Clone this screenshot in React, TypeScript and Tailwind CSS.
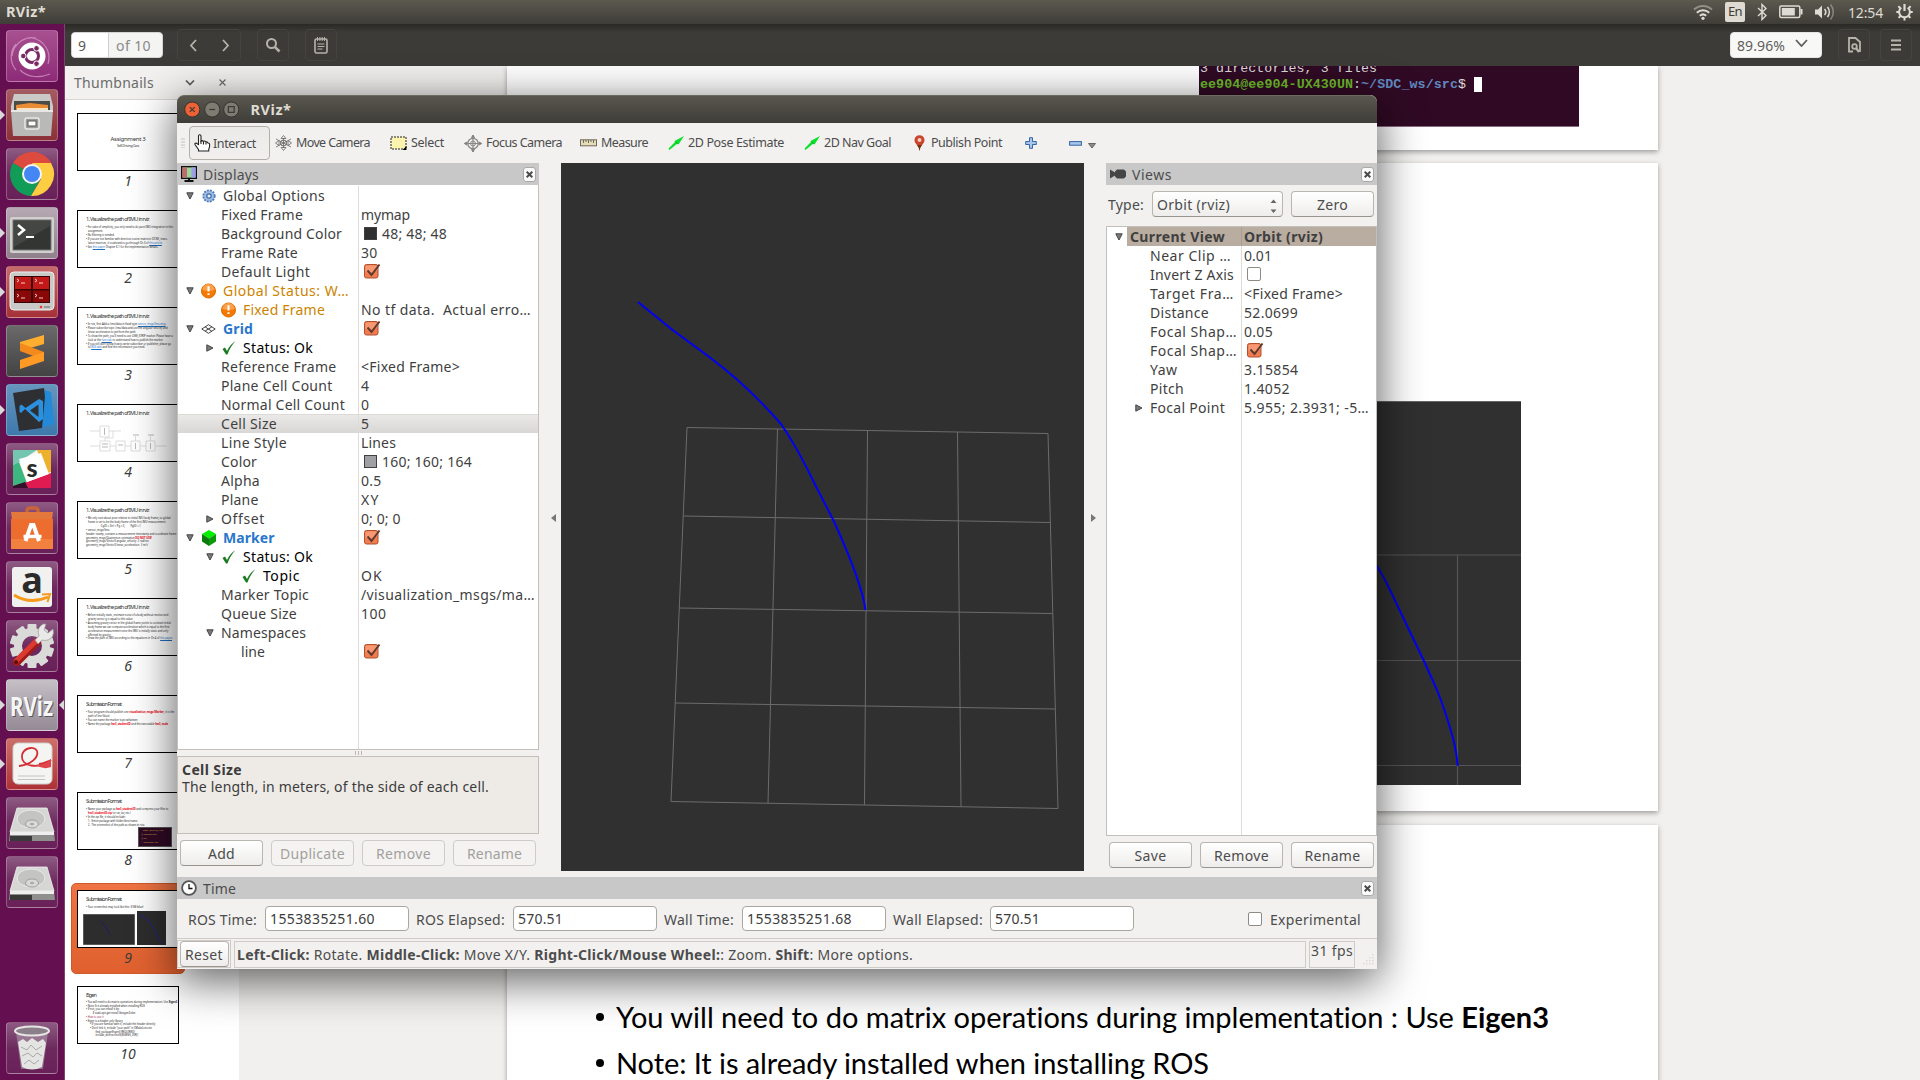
import { useLayoutEffect, useRef, type ReactNode } from "react";

/* Text run whose letter spacing is tuned so that it occupies exactly `w` pixels. */
function T({ w, className = "", children }: { w?: number; className?: string; children: ReactNode }) {
  const ref = useRef<HTMLSpanElement>(null);
  useLayoutEffect(() => {
    const el = ref.current;
    if (!el || !w) return;
    el.style.letterSpacing = "0px";
    const natural = el.getBoundingClientRect().width;
    const n = (el.textContent || "").length;
    if (n) el.style.letterSpacing = `${(w - natural) / n}px`;
  }, [w]);
  return (
    <span ref={ref} className={`inline-block shrink-0 whitespace-pre ${className}`}>
      {children}
    </span>
  );
}

/* ---------- top panel ---------- */

function TopPanel() {
  return (
    <div className="flex h-6 shrink-0 items-center bg-linear-to-b from-[#5c594e] to-[#3e3d38] pl-[6px] pr-[7px] text-[14.5px] text-[#dfdbd2]">
      <T w={40} className="font-bold">RViz*</T>
      <div className="ml-auto flex items-center">
        <svg width="20" height="18" viewBox="0 0 20 18" fill="none" stroke="#dfdbd2" strokeWidth="2">
          <path d="M1 6.5a13 13 0 0 1 18 0" opacity=".45" />
          <path d="M3.8 9.7a9 9 0 0 1 12.4 0" />
          <path d="M6.8 12.7a5 5 0 0 1 6.4 0" />
          <circle cx="10" cy="15.3" r="1.6" fill="#dfdbd2" stroke="none" />
        </svg>
        <div className="ml-3 flex h-5 w-5 items-center justify-center rounded-[2px] bg-[#dfdbd2] text-[13px] text-[#3c3b37]">
          <T w={14}>En</T>
        </div>
        <svg className="ml-3" width="10" height="18" viewBox="0 0 10 18" fill="none" stroke="#dfdbd2" strokeWidth="1.4">
          <path d="M1 5l8 7.5-4 4V1.500l4 4L1 13" />
        </svg>
        <svg className="ml-3" width="24" height="14" viewBox="0 0 24 14">
          <rect x=".8" y="1" width="20" height="11.500" rx="1.500" fill="none" stroke="#dfdbd2" strokeWidth="1.5" />
          <rect x="2.800" y="3" width="13" height="7.500" fill="#dfdbd2" />
          <rect x="21.500" y="4" width="2" height="5.500" fill="#dfdbd2" />
        </svg>
        <svg className="ml-3" width="20" height="18" viewBox="0 0 20 18" fill="none" stroke="#dfdbd2" strokeWidth="1.6">
          <path d="M0 6.500h3l4-4v13l-4-4H0z" fill="#dfdbd2" stroke="none" />
          <path d="M9.500 6a4.500 4.500 0 0 1 0 6M12.500 4a8 8 0 0 1 0 10" />
          <path d="M15.500 1.500a11.500 11.500 0 0 1 0 15" opacity=".4" />
        </svg>
        <T w={35} className="ml-[13px] text-[14px]">12:54</T>
        <svg className="ml-[13px]" width="17" height="18" viewBox="0 0 17 18" fill="none" stroke="#dfdbd2">
          <path d="M5.300 4.600a5.400 5.400 0 1 0 6.400 0" strokeWidth="2" />
          <path d="M8.500 1v7" strokeWidth="2.200" />
          <path d="M2.900 9H.3M16.700 9h-2.600M4.500 13l-1.900 1.900M12.500 13l1.900 1.900M8.500 14.500V17.500M4 5L2.400 3.200M13 5l1.600-1.800" strokeWidth="2" />
        </svg>
      </div>
    </div>
  );
}

/* ---------- launcher ---------- */

type Tile = { bg: string; art: ReactNode; left?: boolean; right?: boolean };

const purple = "bg-linear-to-b from-[#8d5a82] via-[#6d2a5e] to-[#6a2059]";

function Disk() {
  return (
    <g>
      <path d="M11 11h30l7 24H4z" fill="#d6d6d4" stroke="#f2f2f2" strokeWidth=".8" />
      <path d="M4 35h44l1 9H3z" fill="#8f8f8d" />
      <path d="M4 39h22v5H4z" fill="#3a3a3a" />
      <path d="M4 35h44v3H4z" fill="#eee" />
      <ellipse cx="25" cy="22" rx="14" ry="9" fill="#c4c4c2" stroke="#e9e9e9" />
      <ellipse cx="26" cy="27" rx="6.500" ry="4" fill="#d9d9d9" stroke="#9e9e9c" />
      <ellipse cx="26" cy="27" rx="2" ry="1.200" fill="#a9a9a7" />
    </g>
  );
}

const cog = Array.from({ length: 10 }, (_, i) => i * 36);

const tiles: Tile[] = [
  {
    bg: "bg-linear-to-b from-[#a8508f] to-[#8d2a78]",
    art: (
      <g>
        <path d="M26 8a20 20 0 0 1 16 26M10 40A20 20 0 0 1 10 14M44 44c-10 4-22 4-30-4M6 26C8 12 20 6 30 8" stroke="#d9a3cc" strokeWidth="1.200" fill="none" opacity=".7" />
        <circle cx="26" cy="26" r="13.500" fill="#fff" />
        <circle cx="26" cy="26" r="6.500" fill="none" stroke="#772a63" strokeWidth="3" />
        <g stroke="#fff" strokeWidth="1">
          <circle cx="17.300" cy="26" r="2.800" fill="#772a63" />
          <circle cx="30.500" cy="18.300" r="2.800" fill="#772a63" />
          <circle cx="30.500" cy="33.700" r="2.800" fill="#772a63" />
        </g>
      </g>
    ),
  },
  {
    bg: "bg-linear-to-b from-[#a45a62] to-[#8d3038]",
    left: true,
    art: (
      <g>
        <path d="M8 5h36l3 12v6H5v-6z" fill="#c9c9c7" />
        <rect x="8" y="12" width="36" height="12" fill="#4b4b49" />
        <path d="M10 16l14-2 18 2v8H10z" fill="#e98c33" />
        <path d="M11 19h31v4H11z" fill="#f7e3c4" />
        <path d="M5 21h42l-2 26H7z" fill="#b9b9b7" />
        <path d="M5 21h42v2H5z" fill="#e6e6e4" />
        <rect x="19" y="29" width="14" height="11" rx="2" fill="#9b9b99" stroke="#e9e9e7" strokeWidth="1.500" />
        <rect x="22" y="32" width="8" height="5" fill="#fff" stroke="#555" />
      </g>
    ),
  },
  {
    bg: purple,
    art: (
      <g>
        <path d="M26 26L7 15A22 22 0 0 1 45 15z" fill="#dd4b3e" />
        <path d="M26 4a22 22 0 0 1 19.500 11.500H26z" fill="#dd4b3e" />
        <path d="M7 15A22 22 0 0 0 25 48l9.500-17L26 26z" fill="#119d58" />
        <path d="M45 15H26l9 16-10 17A22 22 0 0 0 45 15z" fill="#ffcd41" />
        <circle cx="26" cy="26" r="10" fill="#f4f4f4" />
        <circle cx="26" cy="26" r="8" fill="#4487f4" />
      </g>
    ),
  },
  {
    bg: "bg-linear-to-b from-[#b6a9b3] to-[#8f808c]",
    left: true,
    art: (
      <g>
        <rect x="4" y="10" width="44" height="36" rx="2" fill="#d0d0ce" />
        <rect x="7" y="13" width="38" height="30" fill="#333533" stroke="#777" />
        <path d="M8 14h36v5L8 40z" fill="#4b4e4b" opacity=".7" />
        <path d="M12 18l6 5-6 5" fill="none" stroke="#fff" strokeWidth="2.500" />
        <path d="M20 30h8" stroke="#fff" strokeWidth="2" />
      </g>
    ),
  },
  {
    bg: "bg-linear-to-b from-[#c46a6a] to-[#a53038]",
    left: true,
    art: (
      <g>
        <rect x="4" y="6" width="44" height="38" rx="4" fill="#c9c9c7" stroke="#eee" />
        <rect x="8" y="10" width="36" height="27" fill="#3a0505" />
        <path d="M9 11h16v12H9zM27 11h16v12H27z" fill="#c31818" />
        <path d="M9 24.500h16v11.500H9zM27 24.500h16v11.500H27z" fill="#8a0707" />
        <path d="M11 13l2 1.500-2 1.500M15 17h4M29 13l2 1.500-2 1.500M33 17h4M11 28l2 1.500-2 1.500M15 32h4M29 28l2 1.500-2 1.500M33 32h4" stroke="#fff" strokeWidth=".8" fill="none" />
        <circle cx="35" cy="41" r="1.300" fill="#e33" />
        <path d="M38 41h6" stroke="#999" strokeWidth="2" />
      </g>
    ),
  },
  {
    bg: "bg-linear-to-b from-[#6b696a] to-[#434343]",
    art: (
      <g>
        <path d="M14 17l24-7v9l-24 7z" fill="#ffae2f" />
        <path d="M14 18l24 9v8l-24-9z" fill="#f48a1b" />
        <path d="M14 35l24-8v9l-24 8z" fill="#ff9a24" />
      </g>
    ),
  },
  {
    bg: "bg-linear-to-b from-[#6695bd] to-[#3d78ac]",
    left: true,
    art: (
      <g>
        <path d="M37 6l8 2 3 32-14 4z" fill="#2489d6" />
        <path d="M7 9l31-5 1 9-3 31-23 3z" fill="#2d2f33" />
        <path d="M33 15l4 2v18l-4 3-14-13-4 4-1.500-1v-6l2-1.500 4 3.500z" fill="#2b90de" />
        <path d="M32.500 20.500l-8.500 6 8.500 6.500z" fill="#2d2f33" />
      </g>
    ),
  },
  {
    bg: purple,
    art: (
      <g>
        <path d="M7 7l38 0v38H7z" fill="#f7f7f7" />
        <path d="M7 7h24L13 19v0L7 22z" fill="#74c6b1" />
        <path d="M31 7h14v22l-5 2z" fill="#ecb22e" />
        <path d="M7 22l6-3 8 21-14 3z" fill="#3eb67f" />
        <path d="M7 43l14-4 24-9v15H7z" fill="#df1b52" />
        <path d="M7 43l12-4 3 6H7z" fill="#33102c" />
        <path d="M13 16l22-6 8 21-22 8z" fill="#fff" />
        <text x="26" y="33.500" textAnchor="middle" fontFamily="Lato, sans-serif" fontWeight="900" fontSize="25" fill="#2b2b2b">s</text>
      </g>
    ),
  },
  {
    bg: purple,
    art: (
      <g>
        <path d="M21 18V9q0-3 3-3h5q3 0 3 3v9" stroke="#c9643a" strokeWidth="3.500" fill="none" />
        <path d="M5 10h42l-1 8H6z" fill="#e4773c" />
        <path d="M5 17h42v30H5z" fill="#ec6d2d" />
        <path d="M5 37h42v10H5z" fill="#f2803f" />
        <path d="M19.500 39l5.500-16h2.500L33 39" stroke="#fff" strokeWidth="4" fill="none" />
        <path d="M17.500 34.500h18" stroke="#fff" strokeWidth="3.500" />
      </g>
    ),
  },
  {
    bg: purple,
    art: (
      <g>
        <rect x="6" y="6" width="40" height="40" rx="3" fill="#f1f1ef" />
        <text x="26" y="32" textAnchor="middle" fontFamily="Open Sans, sans-serif" fontWeight="700" fontSize="36" fill="#2b2b2b">a</text>
        <path d="M8 34q16 10 34 2" stroke="#f79a1c" strokeWidth="3" fill="none" />
        <path d="M36 33.500l8-.5-2.500 8" stroke="#f79a1c" strokeWidth="2" fill="none" />
      </g>
    ),
  },
  {
    bg: purple,
    art: (
      <g>
        <g fill="#dadad8">
          {cog.map((a) => (
            <rect key={a} x="21.500" y="4" width="9" height="10" rx="1" transform={`rotate(${a} 26 26)`} />
          ))}
        </g>
        <circle cx="26" cy="26" r="14" fill="none" stroke="#dadad8" strokeWidth="8" />
        <path d="M11 42L31 22" stroke="#a21b16" strokeWidth="8" strokeLinecap="round" />
        <path d="M10 41L30 21" stroke="#db3a32" strokeWidth="5" strokeLinecap="round" />
        <path d="M29 20l4-4q-3-8 4-12l3 0-2 6 4 3 5-4q2 8-5 11-4 1-6 0l-4 4z" fill="#e9e9e7" stroke="#999" strokeWidth=".7" />
        <circle cx="10" cy="42" r="2" fill="#5e0b08" />
      </g>
    ),
  },
  {
    bg: "bg-linear-to-b from-[#c6bfc6] to-[#958a95]",
    left: true,
    right: true,
    art: (
      <g fontFamily="Noto Sans, sans-serif" fontWeight="700">
        <text x="5" y="38" fontSize="26" fill="#5a5a5a" textLength="43" lengthAdjust="spacingAndGlyphs">RViz</text>
        <text x="4" y="36.500" fontSize="26" fill="#f6f6f6" textLength="43" lengthAdjust="spacingAndGlyphs">RViz</text>
      </g>
    ),
  },
  {
    bg: "bg-linear-to-b from-[#cc6f6a] to-[#ad3036]",
    left: true,
    art: (
      <g>
        <rect x="7" y="5" width="39" height="41" rx="5" fill="#f4f4f2" stroke="#cfcfcd" />
        <path d="M13 28c12-1 20-9 18-15-2-5-14-4-15 5-1 10 16 14 29 4-5 2-8 4-12 4" fill="none" stroke="#d32f34" strokeWidth="1.800" />
        <path d="M30 27q9 0 15-6v8q-8 3-15-2" fill="#e0474b" />
        <path d="M12 38h27M12 41.500h27" stroke="#c4c4c2" />
      </g>
    ),
  },
  { bg: purple, art: <Disk /> },
  { bg: purple, art: <Disk /> },
];

const trash: Tile = {
  bg: purple,
  art: (
    <g>
      <path d="M10 10h32l-5 37H15z" fill="#b8b0b7" opacity=".5" />
      <path d="M12 20l5-3 4 3 5-4 6 4 5-3 3 4-4 24q-10 5-20 0z" fill="#e4e4e2" />
      <path d="M15 25l6 3 4-5 5 5 6-4M16 34l6-3 5 4 4-4 5 3M18 42l5-4 5 4 5-4" fill="none" stroke="#aaa9a7" />
      <ellipse cx="26" cy="9" rx="17" ry="4.500" fill="#8c7f8a" stroke="#e6e6e4" strokeWidth="2" />
    </g>
  ),
};

function LauncherTile({ t }: { t: Tile }) {
  return (
    <div className="relative flex w-full shrink-0 pl-[6px]">
      {t.left && (
        <svg className="absolute left-0 top-[21px]" width="5" height="10">
          <path d="M0 0v10l5-5z" fill="#d9d9d9" />
        </svg>
      )}
      <div className={`h-[52px] w-[52px] overflow-hidden rounded-[4px] border border-white/25 ${t.bg}`}>
        <svg className="-ml-px -mt-px" width="52" height="52" viewBox="0 0 52 52">{t.art}</svg>
      </div>
      {t.right && (
        <svg className="absolute left-[59px] top-[21px]" width="5" height="10">
          <path d="M5 0v10L0 5z" fill="#d9d9d9" />
        </svg>
      )}
    </div>
  );
}

function Launcher() {
  return (
    <div className="flex w-[65px] shrink-0 flex-col gap-[7px] border-r border-[#7d4470] bg-[#641050] pb-[6px] pt-[6px]">
      {tiles.map((t, i) => (
        <LauncherTile key={i} t={t} />
      ))}
      <div className="mt-auto">
        <LauncherTile t={trash} />
      </div>
    </div>
  );
}

/* ---------- document viewer ---------- */

function Box({ className, children }: { className: string; children: ReactNode }) {
  return (
    <div className={`flex h-8 shrink-0 items-center rounded-[4px] border border-[#45443f] ${className}`}>{children}</div>
  );
}

function ViewerToolbar() {
  return (
    <div className="flex h-[42px] shrink-0 items-center bg-linear-to-b from-[#2a2926] via-[#3c3b37] via-20% to-[#3c3b37] pl-[6px] pr-2 text-[14px]">
      <div className="flex h-[26px] w-[92px] items-center rounded-[4px] border border-[#d4d4d2] bg-[#f4f4f3] text-[#5a5a58]">
        <div className="flex h-full w-[37px] items-center rounded-l-[3px] border-r border-[#cfcfcd] bg-white pl-[6px]">9</div>
        <div className="pl-[7px] text-[#8a8a88]">
          <T w={35}>of 10</T>
        </div>
      </div>
      <Box className="ml-[14px] w-16 justify-around">
        {["M10 4L5 9.500l5 5.500", "M6 4l5 5.500L6 15"].map((d) => (
          <svg key={d} width="16" height="18" viewBox="0 0 16 18" fill="none" stroke="#b6b3aa" strokeWidth="1.800">
            <path d={d} />
          </svg>
        ))}
      </Box>
      <Box className="ml-4 w-8 justify-center">
        <svg width="16" height="16" viewBox="0 0 16 16" fill="none" stroke="#b6b3aa">
          <circle cx="6.500" cy="6.500" r="4.500" strokeWidth="2" />
          <path d="M9.800 9.800l4.700 4.700" strokeWidth="2.500" />
        </svg>
      </Box>
      <Box className="ml-4 w-8 justify-center">
        <svg width="14" height="17" viewBox="0 0 14 17" fill="none" stroke="#b6b3aa">
          <rect x="1" y="2" width="12" height="14" rx="1.500" strokeWidth="1.600" />
          <path d="M3.500 0v4M5.900 0v4M8.200 0v4M10.500 0v4" strokeWidth="1" />
          <path d="M3.500 7h7M3.500 9.500h7M3.500 12h5" strokeWidth="1.200" />
        </svg>
      </Box>
      <div className="ml-auto flex h-[26px] w-[92px] items-center rounded-[4px] border border-[#e5e5e3] bg-[#f8f8f7] pl-[6px] text-[#5f5f5d]">
        <T w={48}>89.96%</T>
        <svg className="-mt-1 ml-[10px]" width="13" height="8" viewBox="0 0 13 8" fill="none" stroke="#5f5f5d" strokeWidth="1.800">
          <path d="M1 1l5.500 6L12 1" />
        </svg>
      </div>
      <Box className="ml-4 w-8 justify-center">
        <svg width="13" height="16" viewBox="0 0 13 16" fill="none" stroke="#b6b3aa" strokeWidth="1.800">
          <path d="M5 14.500H1V1h6.500L12 5v10" />
          <circle cx="6.500" cy="9.500" r="2.300" />
          <path d="M8 11l3 4" strokeWidth="2.400" />
        </svg>
      </Box>
      <Box className="ml-[10px] w-8 justify-center">
        <svg width="10" height="12" viewBox="0 0 10 12" stroke="#b6b3aa" strokeWidth="1.900">
          <path d="M0 1.500h10M0 6h10M0 10.500h10" />
        </svg>
      </Box>
    </div>
  );
}

const visTitle = "1. Visualize the path of IMU in rviz";

function Red({ children }: { children: ReactNode }) {
  return <b className="text-red-600">{children}</b>;
}
function Link({ children }: { children: ReactNode }) {
  return <span className="text-[#1f6fc4] underline">{children}</span>;
}

type Thumb = { title: string; lines: ReactNode[]; extra?: ReactNode };

const thumbs: Thumb[] = [
  { title: "", lines: [] },
  {
    title: visTitle,
    lines: [
      "• For sake of simplicity, you only need to do pure IMU integration in this",
      "   assignment.",
      "• No filtering is needed.",
      "• If you are not familiar with direction cosine matrices (DCM), trans-",
      <>{"   lation matrices, it is advised to go through Ch.3 of "}<Link>this article</Link>.</>,
      <>{"• See "}<Link>this paper</Link>{" Chapter 6.1 for the implementation details."}</>,
    ],
  },
  {
    title: visTitle,
    lines: [
      <>{"• In rviz, first Add a /imu/data in fixed type "}<Link>sensor_msgs/Imu.msg</Link></>,
      "• Please subscribe topic /imu/data and use the angular velocity and",
      "   linear acceleration to perform the path.",
      "• To show the path, you'll need to use LINE_STRIP marker. Please have a",
      <>{"   look at the "}<Link>tutorials</Link>{" to understand how to publish the marker."}</>,
      "• If you still don't know how to write subscriber or publisher, please go",
      <>{"   to "}<Link>ROS wiki</Link>{" and find the information you need."}</>,
    ],
  },
  {
    title: visTitle,
    lines: [],
    extra: (
      <svg className="mt-[5px]" width="82" height="30" viewBox="0 0 82 30" fill="none" stroke="#cfcfcf" strokeWidth=".7">
        <path d="M14 1h9v11h-9zM14 16h10v10H14zM30 16h9v10h-9zM45 16h9v10h-9zM60 16h9v10h-9zM4 6h10M23 6h12M4 21h10M24 21h6M39 21h6M54 21h6M69 21h11M27 6v7h-8v3M49.500 11v5M64.500 11v5" />
        <path d="M18.500 3v7M49.500 18v6M64.500 18v6M16 19h6M16 22h6M32 20h5M47 10h6M62 10h6" stroke="#999" />
      </svg>
    ),
  },
  {
    title: visTitle,
    lines: [
      "• We only care about pose relative to initial IMU body frame; so global",
      "   frame is set to be the body frame of the first IMU measurement.",
      "                      Cg(0) = I(n) = Pg = 0,        Pg(0) = I",
      "• sensor_msgs/Imu",
      "header: stamp, contains a measurement timestamp and coordinate frame",
      <>{"geometry_msgs/Quaternion orientation "}<Red>DO NOT USE!</Red></>,
      "geometry_msgs/Vector3 angular_velocity  # rad/sec",
      "geometry_msgs/Vector3 linear_acceleration  # m/s²",
    ],
  },
  {
    title: visTitle,
    lines: [
      "• Before initially static, estimate noise of a body without motion and",
      "   gravity vector g is equal to this value.",
      "• Assuming gravity vector in the global frame points to constant initial",
      "   body frame we can compute acceleration which is equal to the first",
      "   acceleration measurement since the IMU is initially static and only",
      "   affected by gravity.",
      <>{"• Draw the path of IMU according to the equations in Ch.4 of "}<Link>this paper</Link>.</>,
    ],
  },
  {
    title: "Submission Format",
    lines: [
      <>{"• Your program should publish one "}<Red>visualization_msgs/Marker</Red>{", it is the"}</>,
      "   path of line (blue).",
      "• You can name the marker topic whatever.",
      <>{"• Name the package "}<Red>hw3_studentID</Red>{" and the executable "}<Red>hw3_node</Red></>,
    ],
  },
  {
    title: "Submission Format",
    lines: [
      <>{"• Name your package as "}<Red>hw3_studentID</Red>{" and compress your files to"}</>,
      <>{"   "}<Red>hw3_studentID.zip</Red>{" (or rar, tar, etc.)"}</>,
      "• In the zip file, it should include:",
      "   1.  Entire package with folder/dest name.",
      "   2.  The screenshot of the path as shown in rviz.",
    ],
    extra: (
      <div className="absolute bottom-[2px] right-[6px] h-5 w-[34px] overflow-hidden border border-[#555] bg-[#300a24] pl-[2px] text-[2.5px] leading-[4px] text-[#c9a54a]">
        ~/SDC_ws/src$ tree
        <br />├ CMakeLists
        <br />├ src
        <br />└ package.xml
      </div>
    ),
  },
  {
    title: "Submission Format",
    lines: ["• Your screenshot may look like this: 3 KB (blue)"],
    extra: (
      <>
        <svg className="absolute bottom-[2px] left-[5px]" width="52" height="31">
          <rect width="52" height="31" fill="#2d2d2d" stroke="#888" />
          <path d="M17 7q7 5 10 14" stroke="#1d1d66" fill="none" />
        </svg>
        <svg className="absolute bottom-[2px] right-[12px]" width="29" height="34">
          <rect width="29" height="34" fill="#2d2d2d" />
          <path d="M2 3l12 9 10 20" stroke="#22228a" fill="none" />
        </svg>
      </>
    ),
  },
  {
    title: "Eigen",
    lines: [
      <>{"• You will need to do matrix operations during implementation: Use "}<b>Eigen3</b></>,
      "• Note: It is already installed when installing ROS",
      "• If not, you can install it by:",
      "          $ sudo apt-get install libeigen3-dev",
      <span className="text-[#a03050]">• How to use it</span>,
      "• Eigen is a header only library",
      "      • If you are familiar with it, include the header directly",
      "      • Don't link it, include \"your path\" in CMakeLists.txt",
      "              find_package(Eigen3 REQUIRED)",
      "              include_directories(${EIGEN3_DIR})",
    ],
  },
];

function ThumbItem({ t, n }: { t: Thumb; n: number }) {
  return (
    <div
      className={`flex h-[91px] w-[114px] shrink-0 flex-col items-center rounded-[5px] pt-[6px] ${
        n === 9 ? "border border-[#cf5a2a] bg-linear-to-b from-[#ef7443] to-[#e0602f] pt-[5px]" : ""
      }`}
    >
      <div className="relative h-[58px] w-[102px] shrink-0 overflow-hidden border border-black bg-white pl-2 pt-1 text-[#333]">
        {n === 1 ? (
          <div className="flex flex-col items-center pr-2 pt-[18px] leading-none">
            <T w={35} className="text-[6px]">Assignment 3</T>
            <T w={22} className="mt-[2px] text-[3.500px]">Self-Driving Cars</T>
          </div>
        ) : (
          <>
            <div className="flex h-2 text-[5.500px] leading-[8px]">
              <T w={t.title.length > 30 ? 63 : t.title.length > 10 ? 35 : 10}>{t.title}</T>
            </div>
            <div className={`whitespace-pre text-[2.600px] text-[#222] ${n === 10 ? "pt-[2px] leading-[3.700px]" : "pt-[3px] leading-[3.900px]"}`}>
              {t.lines.map((l, i) => (
                <div key={i}>{l}</div>
              ))}
            </div>
            {t.extra}
          </>
        )}
      </div>
      <div className="pt-px text-[14px] italic leading-[18px] text-[#3c3c3c]">{n}</div>
    </div>
  );
}

function Sidebar() {
  return (
    <div className="flex w-[174px] shrink-0 flex-col bg-white">
      <div className="flex h-[34px] shrink-0 items-center border-b border-[#d9d7d4] bg-[#f2f1f0] pl-[9px] text-[14px] text-[#6c6c6a]">
        <T w={80}>Thumbnails</T>
        <svg className="ml-[31px]" width="10" height="6" viewBox="0 0 10 6" fill="none" stroke="#5f5f5d" strokeWidth="1.700">
          <path d="M1 .5l4 4 4-4" />
        </svg>
        <svg className="ml-6" width="7" height="7" viewBox="0 0 7 7" stroke="#6c6c6a" strokeWidth="1.200">
          <path d="M.5.5l6 6M6.500.5l-6 6" />
        </svg>
      </div>
      <div className="flex flex-col gap-[6px] pl-[6px] pt-[7px]">
        {thumbs.map((t, i) => (
          <ThumbItem key={i} t={t} n={i + 1} />
        ))}
      </div>
    </div>
  );
}

const page = "relative w-[1151px] shrink-0 bg-white shadow-[0_2px_5px_rgba(0,0,0,0.35)]";

function DocumentArea() {
  return (
    <div className="flex flex-1 flex-col overflow-hidden bg-[#f1f0ee] pl-[268px]">
      <div className={`${page} mb-[13px] flex h-[84px] pl-[692px]`}>
        <div className="h-[61px] w-[380px] overflow-hidden border-b border-[#8a6a82] bg-[#300a24] pl-px font-['Liberation_Mono',monospace] text-[13.300px] leading-[15px] text-[#d8d8d8]">
          <div className="-mt-[5px] h-4">
            <T w={177}>3 directories, 3 files</T>
          </div>
          <div className="flex h-[15px] items-center">
            <T w={153} className="font-bold text-[#6cbc2a]">ee904@ee904-UX430UN</T>
            <span>:</span>
            <T w={97} className="font-bold text-[#6189c0]">~/SDC_ws/src</T>
            <span>$</span>
            <span className="ml-2 h-[15px] w-2 bg-white" />
          </div>
        </div>
      </div>
      <div className={`${page} mb-[14px] h-[648px] pt-[238px]`}>
        <svg className="ml-[570px]" width="444" height="384" viewBox="1077 401 444 384">
          <rect x="1077" y="401" width="444" height="384" fill="#303030" />
          <path d="M1077 401.500h444" stroke="#666" />
          <path d="M1077 555h444M1077 660.500h444M1077 765.500h444M1457.500 555v230" stroke="#555" strokeWidth="1.200" />
          <path d="M1370 556Q1380 569 1390 590L1410 632 1423.500 660 1437 690Q1447 715 1454 742 1457 755 1457.700 766" stroke="#0000f0" strokeWidth="2" fill="none" />
        </svg>
      </div>
      <div className={`${page} flex h-[300px] flex-col pl-[89px] pt-[169px] font-['Lato',sans-serif] text-[29px] leading-[46px] text-black`}>
        <div className="flex items-center">
          <span className="mr-[12px] h-[8px] w-[8px] rounded-full bg-black" />
          <T w={934}>
            You will need to do matrix operations during implementation : Use <b>Eigen3</b>
          </T>
        </div>
        <div className="flex items-center">
          <span className="mr-[12px] h-[8px] w-[8px] rounded-full bg-black" />
          <T w={593}>Note: It is already installed when installing ROS</T>
        </div>
      </div>
    </div>
  );
}

/* ---------- rviz widgets ---------- */

function Check({ on = true, className = "" }: { on?: boolean; className?: string }) {
  return on ? (
    <svg className={className} width="17" height="16" viewBox="0 0 17 16">
      <rect x=".5" y="1.500" width="13.500" height="13.500" rx="2" fill="#f07c50" stroke="#b1502c" />
      <path d="M1.500 3q6-1.500 12 0v4q-6 3-12 2z" fill="#f9a482" opacity=".7" />
      <path d="M3.500 7.500l4 4.500L15.500 1.500" fill="none" stroke="#5d3a2d" strokeWidth="2" />
    </svg>
  ) : (
    <span className={`block h-[14px] w-[14px] shrink-0 rounded-[2px] border border-[#8f8b84] bg-white ${className}`} />
  );
}

function Btn({ w, tw, disabled, children }: { w: string; tw: number; disabled?: boolean; children: string }) {
  return (
    <div
      className={`flex h-[26px] items-center justify-center rounded-[4px] border text-[14px] ${w} ${
        disabled
          ? "border-[#cfccc8] bg-[#f4f3f2] text-[#a3a09c]"
          : "border-[#b9b5af] border-b-[#98948e] bg-linear-to-b from-white to-[#eeedeb] text-[#4c4c4c]"
      }`}
    >
      <T w={tw}>{children}</T>
    </div>
  );
}

function CloseBox() {
  return (
    <div className="flex h-[15px] w-[13px] items-center justify-center rounded-[3px] border border-[#a9a9a7] bg-[#fafafa]">
      <svg width="7" height="7" viewBox="0 0 7 7" stroke="#4a4a4a" strokeWidth="2">
        <path d="M.7.7l5.600 5.600M6.300.7L.7 6.300" />
      </svg>
    </div>
  );
}

function PanelHead({ icon, title, w }: { icon: ReactNode; title: string; w: number }) {
  return (
    <div className="flex h-[22px] shrink-0 items-center bg-[#c8c8c8] pl-1 pr-[3px] text-[14px] text-[#4c4c4c]">
      <span className="flex w-[22px] shrink-0">{icon}</span>
      <T w={w}>{title}</T>
      <span className="ml-auto">
        <CloseBox />
      </span>
    </div>
  );
}

function Arrow({ open }: { open: boolean }) {
  return (
    <svg width="8" height="8" viewBox="0 0 8 8">
      <path d={open ? "M.8.8h6.400L4 7z" : "M.8.8v6.400L7 4z"} fill="#7a7a7a" stroke="#454545" />
    </svg>
  );
}

function WarnIcon() {
  return (
    <svg width="16" height="16" viewBox="0 0 16 16">
      <circle cx="8" cy="8" r="7.500" fill="#f57900" stroke="#d86a00" />
      <path d="M1.500 7a6.500 6.500 0 0 1 13 0q-6 2-13 0z" fill="#fba04a" />
      <path d="M8 3v5.500M8 10.300v2" stroke="#fff" strokeWidth="2.200" />
    </svg>
  );
}
function OkIcon() {
  return (
    <svg width="14" height="14" viewBox="0 0 14 14">
      <path d="M.5 8L3 6.500l2 3.500Q8 3.500 13.500 0 8 6 5.500 13.500H4z" fill="#1b7a22" />
    </svg>
  );
}
function GearIcon() {
  return (
    <svg width="14" height="14" viewBox="0 0 14 14">
      <circle cx="7" cy="7" r="5.600" fill="#a9c3e6" stroke="#4a7ab8" strokeWidth="2" strokeDasharray="1.900 1.050" />
      <circle cx="7" cy="7" r="4.600" fill="#9dbce3" />
      <circle cx="7" cy="7" r="2.200" fill="#e6eef8" stroke="#3d6ba8" strokeWidth="1.200" />
    </svg>
  );
}
function GridIcon() {
  return (
    <svg width="15" height="10" viewBox="0 0 15 10" fill="none" stroke="#444" strokeWidth="1">
      <path d="M.8 5l6.700-4.300L14.200 5 7.500 9.300zM4.100 2.900l6.700 4.300M10.900 2.900L4.100 7.100" />
    </svg>
  );
}
function CubeIcon() {
  return (
    <svg width="14" height="16" viewBox="0 0 14 16">
      <path d="M7 0l7 4-7 4.500L0 4z" fill="#00f000" />
      <path d="M0 4l7 4.500V16l-7-4.500z" fill="#0a7a0a" />
      <path d="M14 4L7 8.500V16l7-4.500z" fill="#0b9a0b" />
    </svg>
  );
}

type Row = {
  label: string;
  w: number;
  depth?: number;
  open?: boolean;
  icon?: ReactNode;
  tone?: string;
  value?: string;
  vw?: number;
  swatch?: string;
  check?: boolean;
  selected?: boolean;
};

const blue = "text-[#2a77cc] font-bold";
const amber = "text-[#cc8400]";

const displayRows: Row[] = [
  { label: "Global Options", w: 102, open: true, icon: <GearIcon /> },
  { label: "Fixed Frame", w: 82, depth: 1, value: "mymap", vw: 49 },
  { label: "Background Color", w: 121, depth: 1, swatch: "bg-[#303030]", value: "48; 48; 48", vw: 65 },
  { label: "Frame Rate", w: 77, depth: 1, value: "30", vw: 16.5 },
  { label: "Default Light", w: 89, depth: 1, check: true },
  { label: "Global Status: W…", w: 126, open: true, icon: <WarnIcon />, tone: amber },
  { label: "Fixed Frame", w: 82, depth: 1, icon: <WarnIcon />, tone: amber, value: "No tf data.  Actual erro…", vw: 170 },
  { label: "Grid", w: 30, open: true, icon: <GridIcon />, tone: blue, check: true },
  { label: "Status: Ok", w: 70, depth: 1, open: false, icon: <OkIcon />, tone: "text-black" },
  { label: "Reference Frame", w: 115.5, depth: 1, value: "<Fixed Frame>", vw: 99 },
  { label: "Plane Cell Count", w: 111.5, depth: 1, value: "4", vw: 8 },
  { label: "Normal Cell Count", w: 124, depth: 1, value: "0", vw: 8 },
  { label: "Cell Size", w: 56, depth: 1, value: "5", vw: 8, selected: true },
  { label: "Line Style", w: 66, depth: 1, value: "Lines", vw: 35 },
  { label: "Color", w: 36, depth: 1, swatch: "bg-[#a0a0a4]", value: "160; 160; 164", vw: 90 },
  { label: "Alpha", w: 39, depth: 1, value: "0.5", vw: 20.5 },
  { label: "Plane", w: 37.5, depth: 1, value: "XY", vw: 18.5 },
  { label: "Offset", w: 44, depth: 1, open: false, value: "0; 0; 0", vw: 39.5 },
  { label: "Marker", w: 51.5, open: true, icon: <CubeIcon />, tone: blue, check: true },
  { label: "Status: Ok", w: 70, depth: 1, open: true, icon: <OkIcon />, tone: "text-black" },
  { label: "Topic", w: 37, depth: 2, icon: <OkIcon />, tone: "text-black", value: "OK", vw: 21.5 },
  { label: "Marker Topic", w: 88, depth: 1, value: "/visualization_msgs/ma…", vw: 174 },
  { label: "Queue Size", w: 76, depth: 1, value: "100", vw: 25.5 },
  { label: "Namespaces", w: 85, depth: 1, open: true },
  { label: "line", w: 24, depth: 2, check: true },
];

const indent = ["pl-[8px]", "pl-[28px]", "pl-[48px]"];

function ValueCell({ r }: { r: Row }) {
  return (
    <div className="flex h-full min-w-0 flex-1 items-center overflow-hidden pl-[2px]">
      {r.check !== undefined && <Check on={r.check} className="mb-px ml-[3px]" />}
      {r.swatch && <span className={`ml-[3px] mr-[5px] block h-[13px] w-[13px] shrink-0 border border-[#404040] ${r.swatch}`} />}
      {r.value && <T w={r.vw}>{r.value}</T>}
    </div>
  );
}

function TreeRow({ r }: { r: Row }) {
  return (
    <div
      className={`flex h-[19px] shrink-0 items-center text-[14px] leading-[19px] text-[#3f3f3f] ${
        r.selected ? "bg-linear-to-b from-[#ebeae8] to-[#d9d7d5] shadow-[inset_0_1px_0_#dcdad7]" : ""
      }`}
    >
      <div className={`flex h-full w-[181px] shrink-0 items-center border-r border-[#dedcda] ${indent[r.depth ?? 0]}`}>
        <span className="flex w-[15px] shrink-0">{r.open !== undefined && <Arrow open={r.open} />}</span>
        {r.icon && <span className="flex w-[22px] shrink-0 justify-center pr-[7px]">{r.icon}</span>}
        <T w={r.w} className={r.tone ?? ""}>{r.label}</T>
      </div>
      <ValueCell r={r} />
    </div>
  );
}

/* ---------- rviz window ---------- */

function TitleBar() {
  return (
    <div className="flex h-7 shrink-0 items-center rounded-t-[7px] border-t border-[#6b6a5f] bg-linear-to-b from-[#59574d] to-[#3e3d39] pl-[7px]">
      {["close", "min", "max"].map((k) => (
        <svg key={k} className="mr-[3px]" width="16.500" height="17" viewBox="0 0 17 17">
          <circle cx="8.500" cy="8.500" r="7.800" fill={k === "close" ? "#ec6236" : "#7d7b72"} stroke="#33322e" />
          <path
            d={k === "close" ? "M6 6l5 5M11 6l-5 5" : k === "min" ? "M5.500 8.500h6" : "M5.500 5.500h6v6h-6z"}
            fill="none"
            stroke="#3c3b37"
            strokeWidth="1.300"
          />
        </svg>
      ))}
      <T w={41} className="ml-[8px] text-[14.500px] font-bold text-[#dfdbd2]">RViz*</T>
    </div>
  );
}

function ArrowTool() {
  return (
    <svg width="16" height="14" viewBox="0 0 16 14">
      <path d="M.5 12.500L7 6 6.500 5 16 0l-5.500 8.500-.8-1.200L1.500 14z" fill="#0be02c" />
      <path d="M6.500 5l4 3.800-1-1.500z" fill="#067a16" />
    </svg>
  );
}

function Tool({ icon, w, ml, gap = "gap-1", children }: { icon: ReactNode; w: number; ml: string; gap?: string; children: string }) {
  return (
    <div className={`flex shrink-0 items-center ${ml} ${gap}`}>
      {icon}
      <span className="flex pt-px">
        <T w={w}>{children}</T>
      </span>
    </div>
  );
}

function ToolBar() {
  return (
    <div className="flex h-10 shrink-0 items-center bg-[#f2f1f0] pl-1 text-[12.500px] text-[#4c4c4c]">
      <svg width="4" height="10" stroke="#c6c3bf">
        <path d="M0 1h4M0 4h4M0 7h4M0 10h4" />
      </svg>
      <div className="ml-1 flex h-[34px] w-[81px] shrink-0 items-center gap-[2px] rounded-[4px] border border-[#b3afa9] bg-linear-to-b from-[#ebeae8] to-[#f1f0ef] pl-1">
        <svg width="17" height="18" viewBox="0 0 17 18" fill="#fff" stroke="#222" strokeWidth="1.100">
          <path d="M4.500 15.500L1 10.500q-.5-1.500 1-1.500l2.500 1.500V2q0-1.300 1.200-1.300T7 2v5q1-1 2.300.3Q10.800 6.500 11.800 8q1.700-.5 2.200 1 1.700 0 1.700 1.500 0 3-1 5v1.500H4.500z" />
          <path d="M7 7v3M9.500 7.500v3M12 8.500v2" />
        </svg>
        <span className="flex pt-[2px]">
          <T w={43}>Interact</T>
        </span>
      </div>
      <Tool
        ml="ml-[5px]"
        w={74}
        icon={
          <svg width="17" height="16" viewBox="0 0 17 16" fill="none" stroke="#666">
            <circle cx="8.500" cy="8" r="3" />
            <path d="M8.500.5L6 3.500h5zM8.500 15.500L6 12.500h5zM.5 8L4 5.500v5zM16.500 8L13 5.500v5zM1 4l15 8M16 4L1 12M8.500 3v10" strokeWidth=".8" />
          </svg>
        }
      >
        Move Camera
      </Tool>
      <Tool
        ml="ml-5"
        w={33}
        icon={
          <svg width="17" height="14" viewBox="0 0 17 14">
            <rect x="1" y="1" width="15" height="12" fill="#fff3b0" stroke="#222" strokeDasharray="2 1" />
            <path d="M16.500 10v4h-4z" fill="#000" />
          </svg>
        }
      >
        Select
      </Tool>
      <Tool
        ml="ml-5"
        w={76}
        icon={
          <svg width="18" height="17" viewBox="0 0 18 17" fill="none" stroke="#888">
            <circle cx="9" cy="8.500" r="5.200" strokeWidth="1.300" />
            <circle cx="9" cy="8.500" r="2.500" />
            <path d="M9 0v17M.5 8.500h17" strokeWidth="1.200" />
            <path d="M9 0l-1.500 2.500h3zM9 17l-1.500-2.500h3zM.3 8.500L2.800 7v3zM17.700 8.500L15.200 7v3z" fill="#777" />
          </svg>
        }
      >
        Focus Camera
      </Tool>
      <Tool
        ml="ml-[18px]"
        w={47}
        icon={
          <svg width="17" height="8" viewBox="0 0 17 8">
            <rect x=".5" y=".8" width="16" height="6" fill="#e4ddb8" stroke="#6e6a5c" />
            <path d="M3.500 1v3M6 1v2M8.500 1v3M11 1v2M13.500 1v3" stroke="#6e6a5c" />
          </svg>
        }
      >
        Measure
      </Tool>
      <Tool ml="ml-5" w={96} icon={<ArrowTool />}>2D Pose Estimate</Tool>
      <Tool ml="ml-5" w={67} icon={<ArrowTool />}>2D Nav Goal</Tool>
      <Tool
        ml="ml-[23px]"
        gap="gap-[6px]"
        w={71}
        icon={
          <svg width="11" height="16" viewBox="0 0 11 16">
            <path d="M5.500 16Q5 11.500 1.800 8.500A5 5 0 1 1 9.200 8.500Q6 11.500 5.500 16z" fill="#c8452c" />
            <path d="M5.500 16Q5 12 3 10h5Q6 12 5.500 16z" fill="#6b3410" />
            <circle cx="5.500" cy="5" r="2" fill="#f6c9bd" />
          </svg>
        }
      >
        Publish Point
      </Tool>
      <svg className="ml-[23px] shrink-0" width="12" height="12" viewBox="0 0 12 12">
        <path d="M4.500.7h3v3.800h3.800v3H7.500v3.800h-3V7.500H.7v-3h3.800z" fill="#a8c6ea" stroke="#3465a4" />
      </svg>
      <svg className="ml-8 shrink-0" width="13" height="5" viewBox="0 0 13 5">
        <rect x=".6" y=".6" width="11.800" height="3.600" fill="#a8c6ea" stroke="#3465a4" />
      </svg>
      <svg className="ml-[6px] mt-[6px] shrink-0" width="8" height="6" viewBox="0 0 8 6">
        <path d="M.5.5h7L4 5z" fill="#8a8a8a" stroke="#666" />
      </svg>
    </div>
  );
}

function DisplaysPanel() {
  return (
    <div className="flex w-[362px] shrink-0 flex-col">
      <PanelHead
        title="Displays"
        w={56}
        icon={
          <svg width="16" height="17" viewBox="0 0 16 17">
            <rect x=".7" y=".7" width="14.600" height="11.600" fill="#99d699" stroke="#111" strokeWidth="1.400" />
            <rect x="1.400" y="1.400" width="4.600" height="10.200" fill="#c06a6a" />
            <rect x="10.400" y="1.400" width="4.200" height="10.200" fill="#9d9dea" />
            <path d="M7 12h2v2h3.500v2h-9v-2H7z" fill="#111" />
          </svg>
        }
      />
      <div className="flex h-[565px] shrink-0 flex-col border border-t-0 border-[#c3c0bb] bg-white pt-px">
        {displayRows.map((r, i) => (
          <TreeRow key={i} r={r} />
        ))}
        <div className="w-[181px] flex-1 border-r border-[#dedcda]" />
      </div>
      <div className="flex h-[6px] shrink-0 items-center justify-center gap-[2px]">
        <span className="h-1 w-px bg-[#bbb8b3]" />
        <span className="h-1 w-px bg-[#bbb8b3]" />
        <span className="h-1 w-px bg-[#bbb8b3]" />
      </div>
      <div className="flex h-[78px] shrink-0 flex-col border border-[#c3c0bb] bg-[#eeebe7] pl-1 pt-1 text-[14px] leading-[17px] text-[#3c3c3c]">
        <T w={60} className="self-start font-bold">Cell Size</T>
        <T w={307} className="self-start">The length, in meters, of the side of each cell.</T>
      </div>
      <div className="flex gap-2 pl-[3px] pt-[6px]">
        <Btn w="w-[83px]" tw={27}>Add</Btn>
        <Btn w="w-[83px]" tw={65} disabled>Duplicate</Btn>
        <Btn w="w-[83px]" tw={55} disabled>Remove</Btn>
        <Btn w="w-[83px]" tw={55} disabled>Rename</Btn>
      </div>
    </div>
  );
}

function Viewport() {
  return (
    <svg className="shrink-0" width="523" height="708" viewBox="561 163 523 708">
      <rect x="561" y="163" width="523" height="708" fill="#303030" />
      <g stroke="#6c6c6e" strokeWidth="1" fill="none">
        <path d="M687 427.500L1048 433.500M683.500 516L1050.500 522.500M679 608L1052.500 613.500M675 703L1055 709M671 801.500L1058 808.500" />
        <path d="M687 427.500L671 801.500M777.500 429L768 803.500M867.500 430.500L864.500 805M957.500 432L961 807M1048 433.500L1058 808.500" />
      </g>
      <path
        d="M638 302L672 329.500 710 357.500Q748 386 781 424 797 447 814 482.500L834 521.500Q862 583 865.500 610"
        stroke="#0000f2"
        strokeWidth="2"
        fill="none"
      />
    </svg>
  );
}

const viewRows: Row[] = [
  { label: "Near Clip …", w: 81, value: "0.01", vw: 28 },
  { label: "Invert Z Axis", w: 84, check: false },
  { label: "Target Fra…", w: 84, value: "<Fixed Frame>", vw: 99 },
  { label: "Distance", w: 59, value: "52.0699", vw: 54 },
  { label: "Focal Shap…", w: 87, value: "0.05", vw: 29 },
  { label: "Focal Shap…", w: 87, check: true },
  { label: "Yaw", w: 27.5, value: "3.15854", vw: 54.5 },
  { label: "Pitch", w: 34, value: "1.4052", vw: 46 },
  { label: "Focal Point", w: 75, open: false, value: "5.955; 2.3931; -5…", vw: 125 },
];

function ViewsPanel() {
  return (
    <div className="flex w-[271px] shrink-0 flex-col">
      <PanelHead
        title="Views"
        w={40}
        icon={
          <svg width="16" height="10" viewBox="0 0 16 10" fill="#454545">
            <path d="M0 0.500l5 3v3l-5 3zM7 .5h7l2 2v5l-2 2H7l-2-2v-5z" />
          </svg>
        }
      />
      <div className="flex items-center pl-[2px] pt-[6px] text-[14px] text-[#4c4c4c]">
        <T w={36}>Type:</T>
        <div className="ml-2 flex h-[26px] w-[131px] items-center rounded-[4px] border border-[#b9b5af] border-b-[#98948e] bg-linear-to-b from-white to-[#eeedeb] pl-1 pr-[5px]">
          <T w={73}>Orbit (rviz)</T>
          <svg className="ml-auto mt-1" width="7" height="14" viewBox="0 0 7 14" fill="#666">
            <path d="M.5 4h6l-3-3.500zM.5 10.500h6l-3 3.500z" />
          </svg>
        </div>
        <div className="ml-2">
          <Btn w="w-[83px]" tw={31}>Zero</Btn>
        </div>
      </div>
      <div className="mt-[9px] flex h-[610px] shrink-0 flex-col border border-[#c3c0bb] bg-white text-[14px] leading-[19px] text-[#3f3f3f]">
        <div className="flex h-[19px] shrink-0 items-center font-bold">
          <span className="flex w-5 justify-center pl-[4px]">
            <Arrow open />
          </span>
          <div className="flex h-full w-[115px] items-center border-r border-[#a89c92] bg-[#b9aca1] pl-[3px]">
            <T w={95}>Current View</T>
          </div>
          <div className="flex h-full flex-1 items-center bg-[#b9aca1] pl-[2px]">
            <T w={79}>Orbit (rviz)</T>
          </div>
        </div>
        {viewRows.map((r, i) => (
          <div key={i} className="flex h-[19px] shrink-0 items-center">
            <div className="flex h-full w-[135px] shrink-0 items-center border-r border-[#dedcda] pl-[28px]">
              <span className="flex w-[15px] shrink-0">{r.open !== undefined && <Arrow open={r.open} />}</span>
              <T w={r.w}>{r.label}</T>
            </div>
            <ValueCell r={r} />
          </div>
        ))}
        <div className="w-[135px] flex-1 border-r border-[#dedcda]" />
      </div>
      <div className="flex gap-2 pl-[3px] pt-[6px]">
        <Btn w="w-[83px]" tw={32}>Save</Btn>
        <Btn w="w-[83px]" tw={55}>Remove</Btn>
        <Btn w="w-[83px]" tw={56}>Rename</Btn>
      </div>
    </div>
  );
}

function Field({ label, lw, value, vw, ml, gap }: { label: string; lw: number; value: string; vw: number; ml: string; gap: string }) {
  return (
    <div className={`flex items-center ${ml} ${gap}`}>
      <span className="flex pt-px">
        <T w={lw}>{label}</T>
      </span>
      <div className="flex h-[25px] w-[144px] items-center rounded-[4px] border border-[#a9a59f] bg-white pl-1 text-[#3c3c3c]">
        <T w={vw}>{value}</T>
      </div>
    </div>
  );
}

function RvizWindow() {
  return (
    <div className="absolute left-[177px] top-[95px] flex h-[874px] w-[1200px] flex-col rounded-t-[7px] bg-[#f2f1f0] shadow-[0_10px_44px_2px_rgba(0,0,0,0.62)]">
      <TitleBar />
      <ToolBar />
      <div className="flex h-[714px] shrink-0">
        <DisplaysPanel />
        <div className="flex w-[22px] items-center justify-end pb-[5px] pr-[5px]">
          <svg width="5" height="8"><path d="M5 0v8L0 4z" fill="#777" /></svg>
        </div>
        <Viewport />
        <div className="flex w-[22px] items-center pb-[5px] pl-[7px]">
          <svg width="5" height="8"><path d="M0 0v8l5-4z" fill="#777" /></svg>
        </div>
        <ViewsPanel />
      </div>
      <PanelHead
        title="Time"
        w={33}
        icon={
          <svg width="16" height="16" viewBox="0 0 16 16">
            <circle cx="8" cy="8" r="6.900" fill="#fff" stroke="#555" strokeWidth="1.800" />
            <path d="M8 4v4.500h3.500" fill="none" stroke="#111" strokeWidth="1.300" />
          </svg>
        }
      />
      <div className="flex h-10 shrink-0 items-center border-b border-[#cfccc8] text-[14px] text-[#4c4c4c]">
        <Field ml="ml-[11px]" gap="gap-[8px]" label="ROS Time:" lw={69} value="1553835251.60" vw={105} />
        <Field ml="ml-[7px]" gap="gap-[8px]" label="ROS Elapsed:" lw={89} value="570.51" vw={45} />
        <Field ml="ml-[7px]" gap="gap-[8px]" label="Wall Time:" lw={70} value="1553835251.68" vw={105} />
        <Field ml="ml-[7px]" gap="gap-[7px]" label="Wall Elapsed:" lw={90} value="570.51" vw={45} />
        <div className="ml-auto flex items-center gap-2 pr-4">
          <Check on={false} />
          <span className="flex pt-px">
            <T w={91}>Experimental</T>
          </span>
        </div>
      </div>
      <div className="flex flex-1 items-start pt-px text-[14px] text-[#4c4c4c]">
        <div className="flex h-[28px] w-[54px] justify-center border border-[#cfccc8]">
          <Btn w="w-[49px]" tw={38}>Reset</Btn>
        </div>
        <div className="ml-[3px] mt-px flex h-[27px] w-[1072px] items-center border border-[#cfccc8] pl-[2px]">
          <T w={676}>
            <b>Left-Click:</b> Rotate. <b>Middle-Click:</b> Move X/Y. <b>Right-Click/Mouse Wheel:</b>: Zoom. <b>Shift</b>: More options.
          </T>
        </div>
        <div className="ml-[3px] mt-px flex h-[27px] w-[46px] items-start border border-[#cfccc8] pl-px leading-[18px]">
          <T w={42}>31 fps</T>
        </div>
        <svg className="ml-auto mr-[2px] mt-[14px]" width="12" height="12" fill="#dddad6">
          {[0, 1, 2, 3].flatMap((r) =>
            [0, 1, 2, 3].filter((c) => c >= 3 - r).map((c) => <rect key={`${r}-${c}`} x={c * 3} y={r * 3} width="1.500" height="1.500" />)
          )}
        </svg>
      </div>
    </div>
  );
}

export default function App() {
  return (
    <div className="relative flex h-[1080px] w-[1920px] flex-col overflow-hidden bg-[#f1f0ee] font-['Noto_Sans','Open_Sans',sans-serif]">
      <TopPanel />
      <div className="flex min-h-0 flex-1">
        <Launcher />
        <div className="flex min-w-0 flex-1 flex-col">
          <ViewerToolbar />
          <div className="flex min-h-0 flex-1 overflow-hidden">
            <Sidebar />
            <DocumentArea />
          </div>
        </div>
      </div>
      <RvizWindow />
    </div>
  );
}
